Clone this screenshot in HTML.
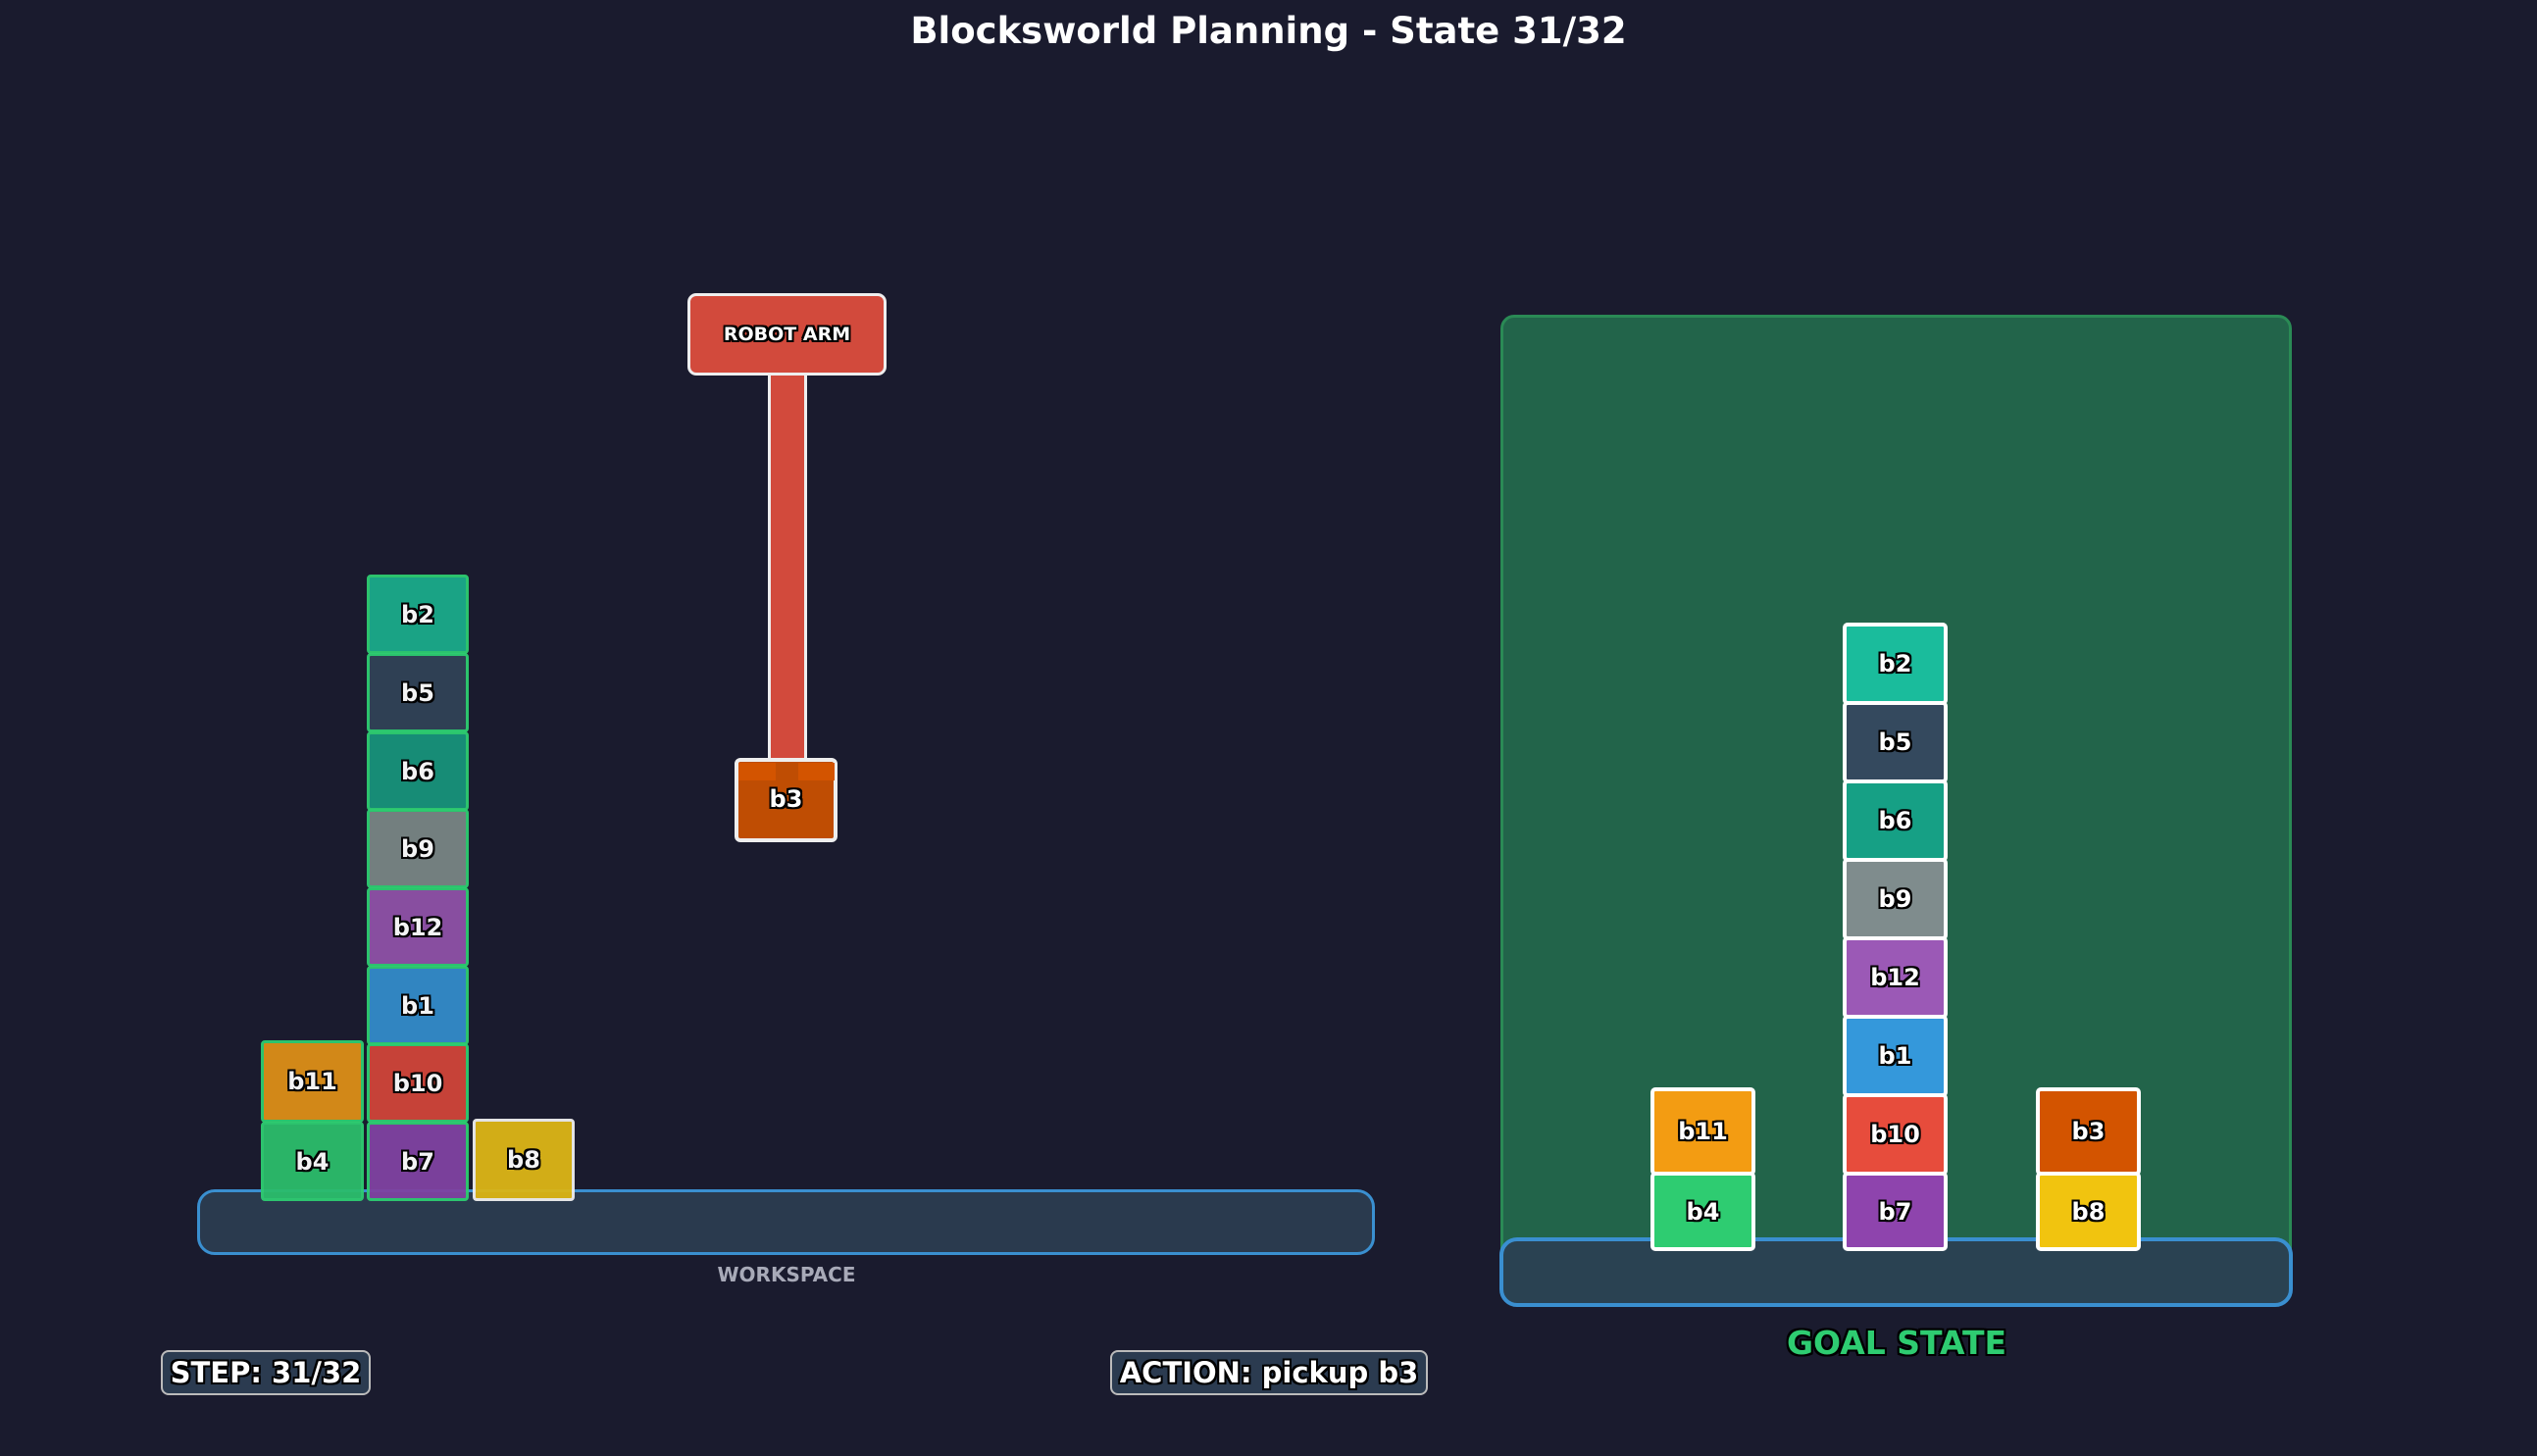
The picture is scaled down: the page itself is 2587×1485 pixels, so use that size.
<!DOCTYPE html>
<html><head><meta charset="utf-8"><style>
body{margin:0;width:2587px;height:1485px;background:#1a1b2e;position:relative;overflow:hidden;font-family:"DejaVu Sans","Liberation Sans",sans-serif;font-weight:bold}
div{position:absolute;box-sizing:border-box}
.t{color:#fff;text-shadow:-2px 0 #000,2px 0 #000,0 -2px #000,0 2px #000,-2px -2px #000,2px 2px #000,-2px 2px #000,2px -2px #000;display:flex;align-items:center;justify-content:center}
.l{border:3px solid #2ecc71;border-radius:4px;font-size:24px;opacity:.95}
.r{border:4px solid #fff;border-radius:5px;font-size:24px}
</style></head><body>
<div class="t" style="left:0;width:2587px;top:6px;height:50px;font-size:37px;text-shadow:none">Blocksworld Planning - State 31/32</div>

<!-- left workspace -->
<div style="left:201px;top:1213px;width:1201px;height:67px;background:#2a3a4e;border:3px solid #3a8fd0;border-radius:18px"></div>
<div style="left:0;width:1604px;top:1288px;height:24px;color:#a8aab8;font-size:20px;text-align:center">WORKSPACE</div>

<div class="t l" style="left:374px;top:586px;width:104px;height:81px;background:#1aab8a">b2</div>
<div class="t l" style="left:374px;top:666px;width:104px;height:81px;background:#314357">b5</div>
<div class="t l" style="left:374px;top:746px;width:104px;height:81px;background:#17937a">b6</div>
<div class="t l" style="left:374px;top:825px;width:104px;height:81px;background:#788584">b9</div>
<div class="t l" style="left:374px;top:905px;width:104px;height:81px;background:#8e51a7">b12</div>
<div class="t l" style="left:374px;top:985px;width:104px;height:81px;background:#338bc9">b1</div>
<div class="t l" style="left:374px;top:1064px;width:104px;height:81px;background:#d04539">b10</div>
<div class="t l" style="left:374px;top:1144px;width:104px;height:81px;background:#8042a1">b7</div>
<div class="t l" style="left:266px;top:1061px;width:105px;height:84px;background:#dc8e17">b11</div>
<div class="t l" style="left:266px;top:1144px;width:105px;height:81px;background:#2bbd6b">b4</div>
<div class="t l" style="left:482px;top:1141px;width:104px;height:84px;background:#dcb516;border-color:#eee">b8</div>

<!-- robot arm -->
<div style="left:783px;top:378px;width:40px;height:400px;background:#d24a3c;border:3px solid #eee;border-top:none;border-bottom:none"></div>
<div class="t" style="left:701px;top:299px;width:203px;height:84px;background:#d24a3c;border:3px solid #eee;border-radius:9px;font-size:19px">ROBOT ARM</div>
<div style="left:749px;top:773px;width:105px;height:86px;background:#bf4d03;border:4px solid #eee;border-radius:6px"></div>
<div style="left:753px;top:778px;width:38px;height:18px;background:#d35400"></div>
<div style="left:814px;top:778px;width:37px;height:18px;background:#d35400"></div>
<div class="t" style="left:749px;top:790px;width:105px;height:50px;font-size:24px">b3</div>

<!-- goal -->
<div style="left:1530px;top:321px;width:807px;height:980px;background:#22644a;border:3px solid #2a8a55;border-radius:14px"></div>
<div style="left:1529px;top:1262px;width:809px;height:71px;background:#2a4252;border:4px solid #3a8fd0;border-radius:18px"></div>
<div class="t r" style="left:1879px;top:635px;width:107px;height:84px;background:#1abc9c">b2</div>
<div class="t r" style="left:1879px;top:715px;width:107px;height:84px;background:#34495e">b5</div>
<div class="t r" style="left:1879px;top:795px;width:107px;height:84px;background:#16a085">b6</div>
<div class="t r" style="left:1879px;top:875px;width:107px;height:84px;background:#7f8c8d">b9</div>
<div class="t r" style="left:1879px;top:955px;width:107px;height:84px;background:#9b59b6">b12</div>
<div class="t r" style="left:1879px;top:1035px;width:107px;height:84px;background:#3498db">b1</div>
<div class="t r" style="left:1879px;top:1115px;width:107px;height:84px;background:#e74c3c">b10</div>
<div class="t r" style="left:1879px;top:1195px;width:107px;height:81px;background:#8e44ad">b7</div>
<div class="t r" style="left:1683px;top:1109px;width:107px;height:90px;background:#f39c12">b11</div>
<div class="t r" style="left:1683px;top:1195px;width:107px;height:81px;background:#2ecc71">b4</div>
<div class="t r" style="left:2076px;top:1109px;width:107px;height:90px;background:#d35400">b3</div>
<div class="t r" style="left:2076px;top:1195px;width:107px;height:81px;background:#f1c40f">b8</div>
<div class="t" style="left:1534px;width:800px;top:1346px;height:46px;font-size:33px;color:#2ecc71">GOAL STATE</div>

<!-- status -->
<div class="t" style="left:164px;top:1377px;width:214px;height:46px;background:#2b3b50;border:2px solid #bbb;border-radius:8px;font-size:29px">STEP: 31/32</div>
<div class="t" style="left:1132px;top:1377px;width:324px;height:46px;background:#2b3b50;border:2px solid #bbb;border-radius:8px;font-size:29px">ACTION: pickup b3</div>
</body></html>
